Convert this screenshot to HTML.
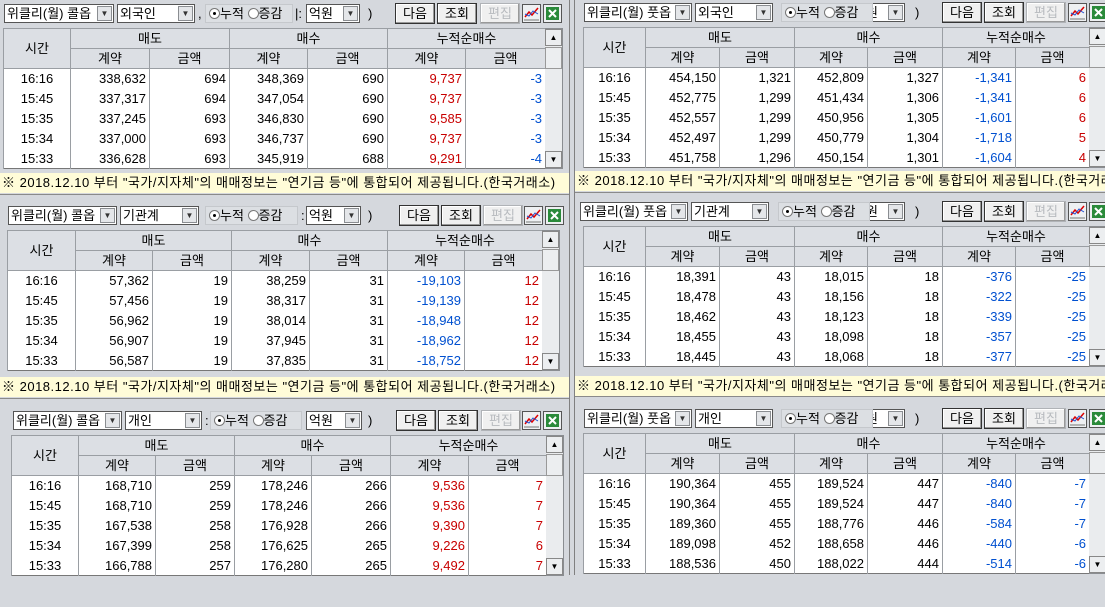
<!DOCTYPE html>
<html><head><meta charset="utf-8">
<style>
*{margin:0;padding:0;box-sizing:border-box}
body{width:1105px;height:575px;overflow:hidden;background:#d5d8dd;position:relative;font-family:"Liberation Sans","Noto Sans CJK KR",sans-serif;font-size:13px;color:#000}
.p{position:absolute;width:570px;height:200px}
.cb{position:absolute;top:4px;height:19px;background:#fff;border:1px solid #555;font-size:13px;line-height:17px;padding-left:2px;white-space:nowrap;overflow:hidden}
.cb i{position:absolute;right:1px;top:1px;width:15px;height:15px;background:#e4e6e9;border:1px solid #8a8d91;font-style:normal;font-size:8px;line-height:13px;text-align:center;color:#333}
.rg{position:absolute;top:4px;height:19px;background:#dcdfe3;border:1px solid #c5c8cc;line-height:17px;font-size:13px;white-space:nowrap;padding-left:3px}
.rd{display:inline-block;width:11px;height:11px;border-radius:50%;border:1px solid #777;background:#fff;vertical-align:-1px;position:relative}
.rd.on:after{content:"";position:absolute;left:3px;top:3px;width:3px;height:3px;border-radius:50%;background:#000}
.bt{position:absolute;top:3px;height:21px;width:40px;background:#f0f0f0;border:1px solid #333;box-shadow:inset -1px -1px 0 #999,inset 1px 1px 0 #fff;text-align:center;line-height:19px;font-size:13px}
.bt.dis{color:#b8bbbf;border-color:#b0b3b7}
.ic{position:absolute;top:4px;width:19px;height:19px;border:1px solid #555;background:#eef0f2}
.tx{position:absolute;top:4px;line-height:19px}
table{position:absolute;top:28px;border-collapse:collapse;table-layout:fixed;background:#fff}
td{height:20px;border-left:1px solid #9a9ea3;border-right:1px solid #9a9ea3;text-align:right;padding-right:3px;line-height:19px;white-space:nowrap;overflow:hidden}
td.t{text-align:center;padding:0}
th{height:20px;font-weight:normal;background:#dcdfe4;border:1px solid #9a9ea3;line-height:19px}
table{border:1px solid #777}
.r{color:#c80000}.b{color:#0050d0}
.sb{position:absolute;top:28px;width:18px;height:141px;background:#eaecee;border:1px solid #8a8d91;border-left:none}
.sb .u,.sb .d{position:absolute;left:0;width:17px;height:17px;background:#eceef0;border:1px solid #888;font-size:8px;text-align:center;line-height:15px}
.sb .u{top:0}.sb .d{bottom:0}
.sb .th{position:absolute;left:0;top:18px;width:17px;height:22px;background:#eceef0;border:1px solid #999}
.nt{position:absolute;height:20px;background:#fffcd8;line-height:20px;font-size:13px;white-space:nowrap;overflow:hidden;padding-left:2px;letter-spacing:0.5px}
.vs{position:absolute;left:569px;top:0;width:6px;height:575px;border-left:1px solid #808080;border-right:1px solid #808080;background:#d5d8dd}
.hs{position:absolute;height:4px;border-top:1px solid #8a8a8a;background:#d5d8dd}
</style></head><body>

<div class="nt" style="left:0;top:173px;width:569px">※ 2018.12.10 부터 "국가/지자체"의 매매정보는 "연기금 등"에 통합되어 제공됩니다.(한국거래소)</div>
<div class="nt" style="left:575px;top:171px;width:530px">※ 2018.12.10 부터 "국가/지자체"의 매매정보는 "연기금 등"에 통합되어 제공됩니다.(한국거래소)</div>
<div class="nt" style="left:0;top:377px;width:569px">※ 2018.12.10 부터 "국가/지자체"의 매매정보는 "연기금 등"에 통합되어 제공됩니다.(한국거래소)</div>
<div class="nt" style="left:575px;top:376px;width:530px">※ 2018.12.10 부터 "국가/지자체"의 매매정보는 "연기금 등"에 통합되어 제공됩니다.(한국거래소)</div>
<div class="hs" style="left:0;top:194px;width:569px"></div>
<div class="hs" style="left:575px;top:192px;width:530px"></div>
<div class="hs" style="left:0;top:398px;width:569px"></div>
<div class="hs" style="left:575px;top:396px;width:530px"></div>
<div class="vs"></div>

<div class="p" style="left:0;top:0">
<div class="cb" style="left:4px;width:110px">위클리(월) 콜옵<i>▼</i></div>
<div class="cb" style="left:117px;width:78px">외국인<i>▼</i></div>
<div class="tx" style="left:198px">,</div>
<div class="rg" style="left:205px;width:88px"><span class="rd on"></span>누적 <span class="rd"></span>증감</div>
<div class="tx" style="left:295px">|:</div>
<div class="cb" style="left:306px;width:54px">억원<i>▼</i></div>
<div class="tx" style="left:368px">)</div>
<div class="bt" style="left:395px">다음</div><div class="bt" style="left:437px">조회</div><div class="bt dis" style="left:480px">편집</div>
<div class="ic" style="left:522px"><svg width="17" height="17"><path d="M2 12L6 7 9 10 15 3" stroke="#d00" fill="none" stroke-width="1.5"/><path d="M2 9L6 11 10 6 15 9" stroke="#2050d0" fill="none"/><path d="M1 15H16" stroke="#777"/></svg></div>
<div class="ic" style="left:543px"><svg width="17" height="17"><rect x="2" y="2" width="13" height="13" fill="#2a8a3a"/><path d="M5 5L12 12M12 5L5 12" stroke="#fff" stroke-width="2"/></svg></div>
<table style="left:3px"><colgroup><col style="width:67px"><col style="width:79px"><col style="width:80px"><col style="width:78px"><col style="width:80px"><col style="width:78px"><col style="width:80px"></colgroup>
<tr><th rowspan="2">시간</th><th colspan="2">매도</th><th colspan="2">매수</th><th colspan="2">누적순매수</th></tr>
<tr><th>계약</th><th>금액</th><th>계약</th><th>금액</th><th>계약</th><th>금액</th></tr>
<tr><td class="t">16:16</td><td>338,632</td><td>694</td><td>348,369</td><td>690</td><td class="r">9,737</td><td class="b">-3</td></tr>
<tr><td class="t">15:45</td><td>337,317</td><td>694</td><td>347,054</td><td>690</td><td class="r">9,737</td><td class="b">-3</td></tr>
<tr><td class="t">15:35</td><td>337,245</td><td>693</td><td>346,830</td><td>690</td><td class="r">9,585</td><td class="b">-3</td></tr>
<tr><td class="t">15:34</td><td>337,000</td><td>693</td><td>346,737</td><td>690</td><td class="r">9,737</td><td class="b">-3</td></tr>
<tr><td class="t">15:33</td><td>336,628</td><td>693</td><td>345,919</td><td>688</td><td class="r">9,291</td><td class="b">-4</td></tr>
</table>
<div class="sb" style="left:545px"><div class="u">▲</div><div class="th"></div><div class="d">▼</div></div>
</div>

<div class="p" style="left:0;top:202px">
<div class="cb" style="left:8px;width:109px">위클리(월) 콜옵<i>▼</i></div>
<div class="cb" style="left:120px;width:79px">기관계<i>▼</i></div>
<div class="rg" style="left:205px;width:93px"><span class="rd on"></span>누적 <span class="rd"></span>증감</div>
<div class="tx" style="left:301px">:</div>
<div class="cb" style="left:306px;width:55px">억원<i>▼</i></div>
<div class="tx" style="left:368px">)</div>
<div class="bt" style="left:399px">다음</div><div class="bt" style="left:441px">조회</div><div class="bt dis" style="left:483px">편집</div>
<div class="ic" style="left:524px"><svg width="17" height="17"><path d="M2 12L6 7 9 10 15 3" stroke="#d00" fill="none" stroke-width="1.5"/><path d="M2 9L6 11 10 6 15 9" stroke="#2050d0" fill="none"/><path d="M1 15H16" stroke="#777"/></svg></div>
<div class="ic" style="left:545px"><svg width="17" height="17"><rect x="2" y="2" width="13" height="13" fill="#2a8a3a"/><path d="M5 5L12 12M12 5L5 12" stroke="#fff" stroke-width="2"/></svg></div>
<table style="left:7px"><colgroup><col style="width:68px"><col style="width:77px"><col style="width:79px"><col style="width:78px"><col style="width:78px"><col style="width:77px"><col style="width:78px"></colgroup>
<tr><th rowspan="2">시간</th><th colspan="2">매도</th><th colspan="2">매수</th><th colspan="2">누적순매수</th></tr>
<tr><th>계약</th><th>금액</th><th>계약</th><th>금액</th><th>계약</th><th>금액</th></tr>
<tr><td class="t">16:16</td><td>57,362</td><td>19</td><td>38,259</td><td>31</td><td class="b">-19,103</td><td class="r">12</td></tr>
<tr><td class="t">15:45</td><td>57,456</td><td>19</td><td>38,317</td><td>31</td><td class="b">-19,139</td><td class="r">12</td></tr>
<tr><td class="t">15:35</td><td>56,962</td><td>19</td><td>38,014</td><td>31</td><td class="b">-18,948</td><td class="r">12</td></tr>
<tr><td class="t">15:34</td><td>56,907</td><td>19</td><td>37,945</td><td>31</td><td class="b">-18,962</td><td class="r">12</td></tr>
<tr><td class="t">15:33</td><td>56,587</td><td>19</td><td>37,835</td><td>31</td><td class="b">-18,752</td><td class="r">12</td></tr>
</table>
<div class="sb" style="left:542px"><div class="u">▲</div><div class="th"></div><div class="d">▼</div></div>
</div>

<div class="p" style="left:0;top:407px">
<div class="cb" style="left:13px;width:109px">위클리(월) 콜옵<i>▼</i></div>
<div class="cb" style="left:125px;width:77px">개인<i>▼</i></div>
<div class="tx" style="left:205px">:</div>
<div class="rg" style="left:210px;width:92px"><span class="rd on"></span>누적 <span class="rd"></span>증감</div>
<div class="cb" style="left:306px;width:56px">억원<i>▼</i></div>
<div class="tx" style="left:368px">)</div>
<div class="bt" style="left:396px">다음</div><div class="bt" style="left:438px">조회</div><div class="bt dis" style="left:481px">편집</div>
<div class="ic" style="left:522px"><svg width="17" height="17"><path d="M2 12L6 7 9 10 15 3" stroke="#d00" fill="none" stroke-width="1.5"/><path d="M2 9L6 11 10 6 15 9" stroke="#2050d0" fill="none"/><path d="M1 15H16" stroke="#777"/></svg></div>
<div class="ic" style="left:543px"><svg width="17" height="17"><rect x="2" y="2" width="13" height="13" fill="#2a8a3a"/><path d="M5 5L12 12M12 5L5 12" stroke="#fff" stroke-width="2"/></svg></div>
<table style="left:11px"><colgroup><col style="width:67px"><col style="width:77px"><col style="width:79px"><col style="width:77px"><col style="width:79px"><col style="width:78px"><col style="width:78px"></colgroup>
<tr><th rowspan="2">시간</th><th colspan="2">매도</th><th colspan="2">매수</th><th colspan="2">누적순매수</th></tr>
<tr><th>계약</th><th>금액</th><th>계약</th><th>금액</th><th>계약</th><th>금액</th></tr>
<tr><td class="t">16:16</td><td>168,710</td><td>259</td><td>178,246</td><td>266</td><td class="r">9,536</td><td class="r">7</td></tr>
<tr><td class="t">15:45</td><td>168,710</td><td>259</td><td>178,246</td><td>266</td><td class="r">9,536</td><td class="r">7</td></tr>
<tr><td class="t">15:35</td><td>167,538</td><td>258</td><td>176,928</td><td>266</td><td class="r">9,390</td><td class="r">7</td></tr>
<tr><td class="t">15:34</td><td>167,399</td><td>258</td><td>176,625</td><td>265</td><td class="r">9,226</td><td class="r">6</td></tr>
<tr><td class="t">15:33</td><td>166,788</td><td>257</td><td>176,280</td><td>265</td><td class="r">9,492</td><td class="r">7</td></tr>
</table>
<div class="sb" style="left:546px"><div class="u">▲</div><div class="th"></div><div class="d">▼</div></div>
</div>

<div class="p" style="left:575px;top:-1px;width:530px">
<div class="cb" style="left:9px;width:108px">위클리(월) 풋옵<i>▼</i></div>
<div class="cb" style="left:120px;width:78px">외국인<i>▼</i></div>
<div class="cb" style="left:270px;width:60px">&nbsp;&nbsp;&nbsp;&nbsp;&nbsp;원<i>▼</i></div>
<div class="rg" style="left:206px;width:92px"><span class="rd on"></span>누적 <span class="rd"></span>증감</div>
<div class="tx" style="left:340px">)</div>
<div class="bt" style="left:367px">다음</div><div class="bt" style="left:409px">조회</div><div class="bt dis" style="left:451px">편집</div>
<div class="ic" style="left:493px"><svg width="17" height="17"><path d="M2 12L6 7 9 10 15 3" stroke="#d00" fill="none" stroke-width="1.5"/><path d="M2 9L6 11 10 6 15 9" stroke="#2050d0" fill="none"/><path d="M1 15H16" stroke="#777"/></svg></div>
<div class="ic" style="left:514px"><svg width="17" height="17"><rect x="2" y="2" width="13" height="13" fill="#2a8a3a"/><path d="M5 5L12 12M12 5L5 12" stroke="#fff" stroke-width="2"/></svg></div>
<table style="left:8px"><colgroup><col style="width:62px"><col style="width:74px"><col style="width:75px"><col style="width:73px"><col style="width:75px"><col style="width:73px"><col style="width:74px"></colgroup>
<tr><th rowspan="2">시간</th><th colspan="2">매도</th><th colspan="2">매수</th><th colspan="2">누적순매수</th></tr>
<tr><th>계약</th><th>금액</th><th>계약</th><th>금액</th><th>계약</th><th>금액</th></tr>
<tr><td class="t">16:16</td><td>454,150</td><td>1,321</td><td>452,809</td><td>1,327</td><td class="b">-1,341</td><td class="r">6</td></tr>
<tr><td class="t">15:45</td><td>452,775</td><td>1,299</td><td>451,434</td><td>1,306</td><td class="b">-1,341</td><td class="r">6</td></tr>
<tr><td class="t">15:35</td><td>452,557</td><td>1,299</td><td>450,956</td><td>1,305</td><td class="b">-1,601</td><td class="r">6</td></tr>
<tr><td class="t">15:34</td><td>452,497</td><td>1,299</td><td>450,779</td><td>1,304</td><td class="b">-1,718</td><td class="r">5</td></tr>
<tr><td class="t">15:33</td><td>451,758</td><td>1,296</td><td>450,154</td><td>1,301</td><td class="b">-1,604</td><td class="r">4</td></tr>
</table>
<div class="sb" style="left:514px"><div class="u">▲</div><div class="th"></div><div class="d">▼</div></div>
</div>

<div class="p" style="left:575px;top:198px;width:530px">
<div class="cb" style="left:5px;width:108px">위클리(월) 풋옵<i>▼</i></div>
<div class="cb" style="left:116px;width:78px">기관계<i>▼</i></div>
<div class="cb" style="left:270px;width:60px">&nbsp;&nbsp;&nbsp;&nbsp;&nbsp;원<i>▼</i></div>
<div class="rg" style="left:203px;width:92px"><span class="rd on"></span>누적 <span class="rd"></span>증감</div>
<div class="tx" style="left:340px">)</div>
<div class="bt" style="left:367px">다음</div><div class="bt" style="left:409px">조회</div><div class="bt dis" style="left:451px">편집</div>
<div class="ic" style="left:493px"><svg width="17" height="17"><path d="M2 12L6 7 9 10 15 3" stroke="#d00" fill="none" stroke-width="1.5"/><path d="M2 9L6 11 10 6 15 9" stroke="#2050d0" fill="none"/><path d="M1 15H16" stroke="#777"/></svg></div>
<div class="ic" style="left:514px"><svg width="17" height="17"><rect x="2" y="2" width="13" height="13" fill="#2a8a3a"/><path d="M5 5L12 12M12 5L5 12" stroke="#fff" stroke-width="2"/></svg></div>
<table style="left:8px"><colgroup><col style="width:62px"><col style="width:74px"><col style="width:75px"><col style="width:73px"><col style="width:75px"><col style="width:73px"><col style="width:74px"></colgroup>
<tr><th rowspan="2">시간</th><th colspan="2">매도</th><th colspan="2">매수</th><th colspan="2">누적순매수</th></tr>
<tr><th>계약</th><th>금액</th><th>계약</th><th>금액</th><th>계약</th><th>금액</th></tr>
<tr><td class="t">16:16</td><td>18,391</td><td>43</td><td>18,015</td><td>18</td><td class="b">-376</td><td class="b">-25</td></tr>
<tr><td class="t">15:45</td><td>18,478</td><td>43</td><td>18,156</td><td>18</td><td class="b">-322</td><td class="b">-25</td></tr>
<tr><td class="t">15:35</td><td>18,462</td><td>43</td><td>18,123</td><td>18</td><td class="b">-339</td><td class="b">-25</td></tr>
<tr><td class="t">15:34</td><td>18,455</td><td>43</td><td>18,098</td><td>18</td><td class="b">-357</td><td class="b">-25</td></tr>
<tr><td class="t">15:33</td><td>18,445</td><td>43</td><td>18,068</td><td>18</td><td class="b">-377</td><td class="b">-25</td></tr>
</table>
<div class="sb" style="left:514px"><div class="u">▲</div><div class="th"></div><div class="d">▼</div></div>
</div>

<div class="p" style="left:575px;top:405px;width:530px">
<div class="cb" style="left:9px;width:108px">위클리(월) 풋옵<i>▼</i></div>
<div class="cb" style="left:120px;width:78px">개인<i>▼</i></div>
<div class="cb" style="left:270px;width:60px">&nbsp;&nbsp;&nbsp;&nbsp;&nbsp;원<i>▼</i></div>
<div class="rg" style="left:206px;width:92px"><span class="rd on"></span>누적 <span class="rd"></span>증감</div>
<div class="tx" style="left:340px">)</div>
<div class="bt" style="left:367px">다음</div><div class="bt" style="left:409px">조회</div><div class="bt dis" style="left:451px">편집</div>
<div class="ic" style="left:493px"><svg width="17" height="17"><path d="M2 12L6 7 9 10 15 3" stroke="#d00" fill="none" stroke-width="1.5"/><path d="M2 9L6 11 10 6 15 9" stroke="#2050d0" fill="none"/><path d="M1 15H16" stroke="#777"/></svg></div>
<div class="ic" style="left:514px"><svg width="17" height="17"><rect x="2" y="2" width="13" height="13" fill="#2a8a3a"/><path d="M5 5L12 12M12 5L5 12" stroke="#fff" stroke-width="2"/></svg></div>
<table style="left:8px"><colgroup><col style="width:62px"><col style="width:74px"><col style="width:75px"><col style="width:73px"><col style="width:75px"><col style="width:73px"><col style="width:74px"></colgroup>
<tr><th rowspan="2">시간</th><th colspan="2">매도</th><th colspan="2">매수</th><th colspan="2">누적순매수</th></tr>
<tr><th>계약</th><th>금액</th><th>계약</th><th>금액</th><th>계약</th><th>금액</th></tr>
<tr><td class="t">16:16</td><td>190,364</td><td>455</td><td>189,524</td><td>447</td><td class="b">-840</td><td class="b">-7</td></tr>
<tr><td class="t">15:45</td><td>190,364</td><td>455</td><td>189,524</td><td>447</td><td class="b">-840</td><td class="b">-7</td></tr>
<tr><td class="t">15:35</td><td>189,360</td><td>455</td><td>188,776</td><td>446</td><td class="b">-584</td><td class="b">-7</td></tr>
<tr><td class="t">15:34</td><td>189,098</td><td>452</td><td>188,658</td><td>446</td><td class="b">-440</td><td class="b">-6</td></tr>
<tr><td class="t">15:33</td><td>188,536</td><td>450</td><td>188,022</td><td>444</td><td class="b">-514</td><td class="b">-6</td></tr>
</table>
<div class="sb" style="left:514px"><div class="u">▲</div><div class="th"></div><div class="d">▼</div></div>
</div>

</body></html>
